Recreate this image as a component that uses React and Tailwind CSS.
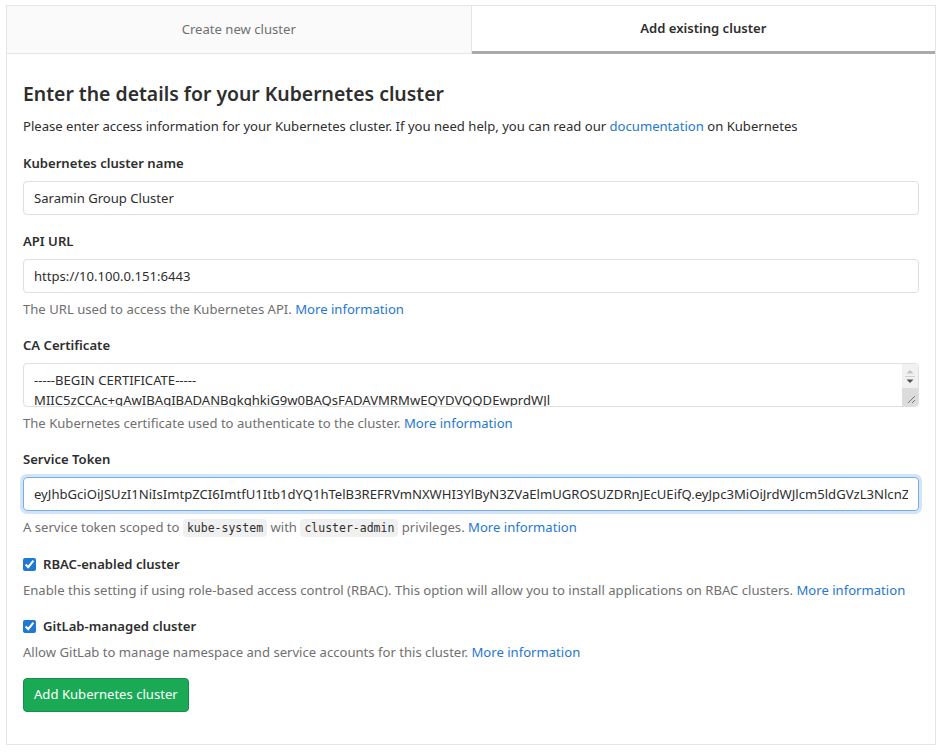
import { useState } from 'react';

const CERT = `-----BEGIN CERTIFICATE-----
MIIC5zCCAc+gAwIBAgIBADANBgkqhkiG9w0BAQsFADAVMRMwEQYDVQQDEwprdWJl
cm5ldGVzMB4XDTE5MDQxMDA1MjQ0N1oXDTI5MDQwNzA1MjQ0N1owFTETMBEGA1UE
AxMKa3ViZXJuZXRlczCCASIwDQYJKoZIhvcNAQEBBQADggEPADCCAQoCggEBAMxx
-----END CERTIFICATE-----`;

const TOKEN =
  'eyJhbGciOiJSUzI1NiIsImtpZCI6ImtfU1Itb1dYQ1hTelB3REFRVmNXWHI3YlByN3ZVaElmUGROSUZDRnJEcUEifQ.eyJpc3MiOiJrdWJlcm5ldGVzL3NlcnZpY2VhY2NvdW50Iiwia3ViZXJuZXRlcy5pbyJ9';

function Label({ children }) {
  return <label className="block text-[13.1px] leading-[20px] font-semibold text-[#2e2e2e] mb-2">{children}</label>;
}

function Help({ children }) {
  return <p className="mt-[6px] text-[13.1px] leading-[20px] text-[#707070]">{children}</p>;
}

function More() {
  return <a href="#" className="text-[#1f78d1]">More information</a>;
}

function Code({ children }) {
  return (
    <code className="px-1 py-[2px] rounded bg-[#f0f0f0] text-[#2e2e2e] text-[11.5px] font-['DejaVu_Sans_Mono',monospace]">
      {children}
    </code>
  );
}

// headless hides native scrollbars, so the textarea's bar is drawn on top
function FakeScrollbar() {
  return (
    <div className="absolute right-px top-px bottom-px w-[16px] flex flex-col bg-[#f1f1f1] rounded-r pointer-events-none">
      <svg width="16" height="9" viewBox="0 0 16 9" className="mt-[3px]">
        <path d="M4.5 6.5 L8 3 L11.5 6.5 Z" fill="#c1c1c1" />
      </svg>
      <div className="mx-[3px] h-px bg-[#d0d0d0]" />
      <svg width="16" height="9" viewBox="0 0 16 9">
        <path d="M4.5 2.5 L8 6 L11.5 2.5 Z" fill="#505050" />
      </svg>
      <div className="flex-1 bg-[#dcdcdc] mt-[2px] flex items-end justify-end rounded-br">
        <svg width="10" height="10" viewBox="0 0 10 10" className="mr-[2px] mb-[2px]">
          <path d="M9 2 L2 9 M9 6 L6 9" stroke="#777" strokeWidth="1" />
        </svg>
      </div>
    </div>
  );
}

export default function App() {
  const [tab, setTab] = useState('existing');
  const [rbac, setRbac] = useState(true);
  const [managed, setManaged] = useState(true);

  return (
    <div className="min-h-screen bg-white pt-[5px] px-[6px] font-['Noto_Sans',sans-serif] text-[#2e2e2e]">
      <div className="w-[930px] border border-[#e5e5e5]">
        <div className="flex h-[48px]">
          <button
            type="button"
            onClick={() => setTab('new')}
            className="flex-1 bg-[#fafafa] border-r border-b border-[#e5e5e5] text-[13.1px] text-[#707070]"
          >
            Create new cluster
          </button>
          <button
            type="button"
            onClick={() => setTab('existing')}
            className="flex-1 bg-white border-b-[3px] border-[#aaaaaa] text-[13.1px] font-semibold text-[#2e2e2e]"
          >
            Add existing cluster
          </button>
        </div>

        <div className="px-4 pt-[25px] pb-[32px]">
          <h3 className="text-[19.4px] leading-[30px] font-semibold text-[#2e2e2e]">
            Enter the details for your Kubernetes cluster
          </h3>
          <p className="mt-[7px] mb-[17px] text-[13.1px] leading-[20px]">
            Please enter access information for your Kubernetes cluster. If you need help, you can read our{' '}
            <a href="#" className="text-[#1f78d1]">documentation</a> on Kubernetes
          </p>

          <div className="mb-4">
            <Label>Kubernetes cluster name</Label>
            <input
              defaultValue="Saramin Group Cluster"
              className="w-full h-[34px] px-[10px] border border-[#dfdfdf] rounded text-[13.1px] outline-none"
            />
          </div>

          <div className="mb-4">
            <Label>API URL</Label>
            <input
              defaultValue="https://10.100.0.151:6443"
              className="w-full h-[34px] px-[10px] border border-[#dfdfdf] rounded text-[13.1px] outline-none"
            />
            <Help>
              The URL used to access the Kubernetes API. <More />
            </Help>
          </div>

          <div className="mb-4">
            <Label>CA Certificate</Label>
            <div className="relative">
              <textarea
                defaultValue={CERT}
                rows={2}
                className="block w-full h-[44px] pl-[10px] pr-[20px] py-[6px] border border-[#dfdfdf] rounded text-[13.1px] leading-[20px] outline-none resize-none"
              />
              <FakeScrollbar />
            </div>
            <Help>
              The Kubernetes certificate used to authenticate to the cluster. <More />
            </Help>
          </div>

          <div className="mb-4">
            <Label>Service Token</Label>
            <input
              defaultValue={TOKEN}
              className="w-full h-[34px] px-[10px] border border-[#73afea] rounded text-[13.1px] outline-none shadow-[0_0_0_3px_rgba(31,120,209,0.2)]"
            />
            <Help>
              A service token scoped to <Code>kube-system</Code> with <Code>cluster-admin</Code> privileges. <More />
            </Help>
          </div>

          <div className="mb-4">
            <label className="flex items-center gap-[7px] text-[13.1px] leading-[20px] font-semibold">
              <input
                type="checkbox"
                checked={rbac}
                onChange={() => setRbac(!rbac)}
                className="w-[13px] h-[13px] m-0 accent-[#1f78d1]"
              />
              RBAC-enabled cluster
            </label>
            <Help>
              Enable this setting if using role-based access control (RBAC). This option will allow you to install
              applications on RBAC clusters. <More />
            </Help>
          </div>

          <div className="mb-4">
            <label className="flex items-center gap-[7px] text-[13.1px] leading-[20px] font-semibold">
              <input
                type="checkbox"
                checked={managed}
                onChange={() => setManaged(!managed)}
                className="w-[13px] h-[13px] m-0 accent-[#1f78d1]"
              />
              GitLab-managed cluster
            </label>
            <Help>
              Allow GitLab to manage namespace and service accounts for this cluster. <More />
            </Help>
          </div>

          <button
            type="button"
            className="h-[34px] px-[10px] rounded bg-[#1aaa55] border border-[#168f48] text-white text-[13.1px]"
          >
            Add Kubernetes cluster
          </button>
        </div>
      </div>
    </div>
  );
}
